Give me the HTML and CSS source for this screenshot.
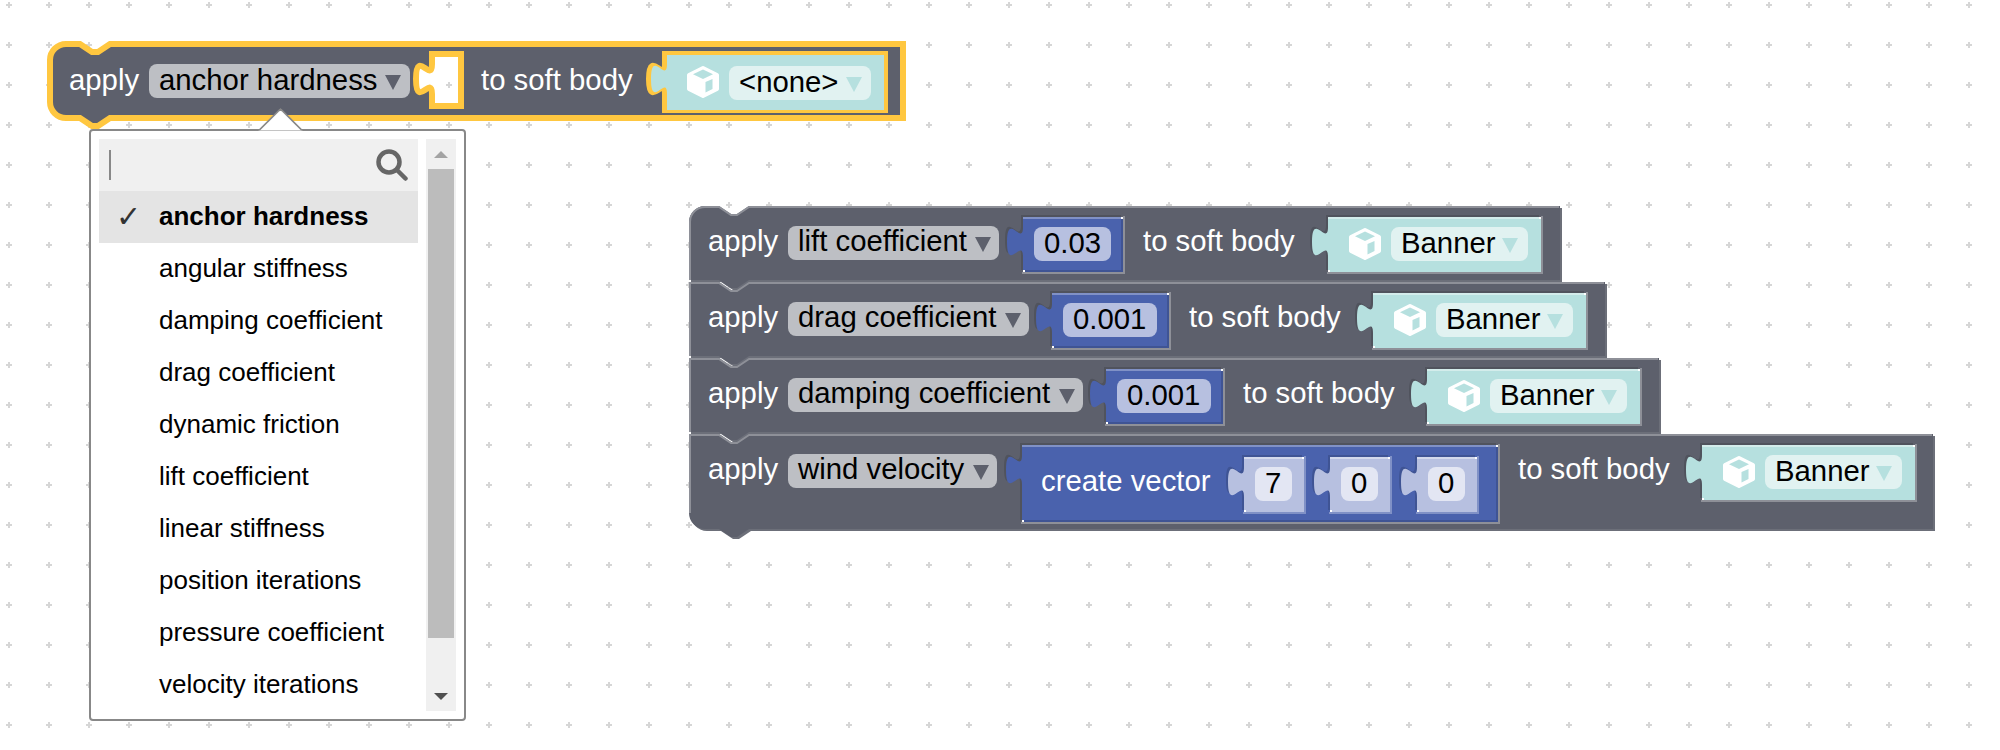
FILE: index.html
```html
<!DOCTYPE html>
<html lang="en">
<head>
<meta charset="UTF-8">
<title>Soft body blocks</title>
<link rel="stylesheet" href="styles.css">
</head>
<body>
<div class="workspace">
  <svg class="canvas" width="2000" height="750" viewBox="0 0 2000 750">
    <defs>
      <pattern id="grid" width="40" height="40" patternUnits="userSpaceOnUse">
        <path class="grid-plus" d="M6 5H12M9 2V8"/>
      </pattern>

      <!-- value blocks: hole shadow, hole highlight, body, dark edge, light edge -->
      <g id="value-213">
        <path class="hole-dark" d="M213,0 H0 v10 c0,20 -16,-16 -16,15 s16,-5 16,15 V55 H213 Z"/>
        <path class="hole-light" d="M214,-1 V56 H-1"/>
        <path class="value-body" d="M213,0 H0 v10 c0,20 -16,-16 -16,15 s16,-5 16,15 V55 H213 Z"/>
        <path class="edge-light" d="M0,1 H213"/>
        <path class="corner" d="M211,0h2v2h-2z M0,53h2v2h-2z"/>
      </g>
      <g id="value-100">
        <path class="hole-dark" d="M100,0 H0 v10 c0,20 -16,-16 -16,15 s16,-5 16,15 V55 H100 Z"/>
        <path class="hole-light" d="M101,-1 V56 H-1"/>
        <path class="value-body" d="M100,0 H0 v10 c0,20 -16,-16 -16,15 s16,-5 16,15 V55 H100 Z"/>
        <path class="edge-dark" d="M99,0 V54 H0"/>
        <path class="edge-light" d="M0,1 H100"/>
        <path class="corner" d="M98,0h2v2h-2z M0,53h2v2h-2z"/>
      </g>
      <g id="value-117">
        <path class="hole-dark" d="M117,0 H0 v10 c0,20 -16,-16 -16,15 s16,-5 16,15 V55 H117 Z"/>
        <path class="hole-light" d="M118,-1 V56 H-1"/>
        <path class="value-body" d="M117,0 H0 v10 c0,20 -16,-16 -16,15 s16,-5 16,15 V55 H117 Z"/>
        <path class="edge-dark" d="M116,0 V54 H0"/>
        <path class="edge-light" d="M0,1 H117"/>
        <path class="corner" d="M115,0h2v2h-2z M0,53h2v2h-2z"/>
      </g>
      <g id="value-vector">
        <path class="hole-dark" d="M476,0 H0 v10 c0,20 -16,-16 -16,15 s16,-5 16,15 V77 H476 Z"/>
        <path class="hole-light" d="M477,-1 V78 H-1"/>
        <path class="value-body" d="M476,0 H0 v10 c0,20 -16,-16 -16,15 s16,-5 16,15 V77 H476 Z"/>
        <path class="edge-dark" d="M475,0 V76 H0"/>
        <path class="edge-light" d="M0,1 H476"/>
        <path class="corner" d="M474,0h2v2h-2z M0,75h2v2h-2z"/>
      </g>
      <g id="value-60">
        <path class="hole-dark" d="M60,0 H0 v10 c0,20 -16,-16 -16,15 s16,-5 16,15 V55 H60 Z"/>
        <path class="hole-light" d="M61,-1 V56 H-1"/>
        <path class="value-body" d="M60,0 H0 v10 c0,20 -16,-16 -16,15 s16,-5 16,15 V55 H60 Z"/>
        <path class="edge-light" d="M0,1 H60"/>
        <path class="corner" d="M58,0h2v2h-2z M0,53h2v2h-2z"/>
      </g>

      <g id="cube">
        <path class="cube-shell" d="M16 2L30 9V23L16 30L2 23V9Z"/>
        <path class="cube-face" d="M16 3.500L26 8.300L16 13L6 8.300Z"/>
        <path class="cube-face" d="M18.500 16L25.500 13V23L18.500 26.500Z"/>
      </g>
      <path id="arrow" d="M0 0H16L8 15Z"/>
    </defs>

    <rect width="2000" height="750" fill="url(#grid)"/>

    <!-- selected block -->
    <g>
      <path class="block-selected" fill-rule="evenodd" d="M50,60 a16,16 0 0 1 16,-16 H80 l12,8 6,0 12,-8 H903 V118 H110 l-12,8 -6,0 -12,-8 H66 a16,16 0 0 1 -16,-16 Z
        M461,54 H432 v10 c0,20 -16,-16 -16,15 s16,-5 16,15 V106 H461 Z
        M885,54 H665 v10 c0,20 -16,-16 -16,15 s16,-5 16,15 V110 H885 Z"/>
      <text class="label" x="69" y="90">apply</text>
      <rect class="pill-grey" x="149" y="64" width="261" height="34" rx="8"/>
      <text class="field" x="159" y="90">anchor hardness</text>
      <use class="arrow-grey" href="#arrow" x="385" y="75"/>
      <text class="label" x="481" y="90">to soft body</text>
      <path class="teal-flat" d="M884,55 H667 v9 c0,20 -16,-16 -16,15 s16,-5 16,15 V110 H884 Z"/>
      <use class="teal-flat" href="#cube" x="687" y="66"/>
      <rect class="pill-teal" x="729" y="66" width="142" height="34" rx="8"/>
      <text class="field" x="739" y="92">&lt;none&gt;</text>
      <use class="arrow-teal" href="#arrow" x="846" y="77"/>
    </g>

    <!-- stack of blocks -->
    <g>
      <path class="block-dark" d="M689,222 a16,16 0 0 1 16,-16 H719 l12,8 6,0 12,-8 H1560 V280 H749 l-12,8 -6,0 -12,-8 H689 Z"/>
      <path class="block-body" d="M689,222 a16,16 0 0 1 16,-16 H719 l12,8 6,0 12,-8 H1560 V280 H749 l-12,8 -6,0 -12,-8 H689 Z"/>
      <path class="block-light" d="M690,280 V222 a15,15 0 0 1 15,-15 H719 l12,8 6,0 12,-8 H1559"/>
      <text class="label" x="708" y="251">apply</text>
      <rect class="pill-grey" x="788" y="226" width="211" height="34" rx="8"/>
      <text class="field" x="798" y="251">lift coefficient</text>
      <use class="arrow-grey" href="#arrow" x="975" y="237"/>
      <use class="blue" href="#value-100" x="1023" y="217"/>
      <rect class="pill-blue" x="1034" y="227" width="77" height="34" rx="8"/>
      <text class="field" x="1044" y="253">0.03</text>
      <text class="label" x="1143" y="251">to soft body</text>
      <use class="teal" href="#value-213" x="1328" y="217"/>
      <use class="teal" href="#cube" x="1349" y="228"/>
      <rect class="pill-teal" x="1391" y="227" width="137" height="34" rx="8"/>
      <text class="field" x="1401" y="253">Banner</text>
      <use class="arrow-teal" href="#arrow" x="1502" y="238"/>
    </g>
    <g>
      <path class="block-dark" d="M689,282 H719 l12,8 6,0 12,-8 H1605 V356 H749 l-12,8 -6,0 -12,-8 H689 Z"/>
      <path class="block-body" d="M689,282 H719 l12,8 6,0 12,-8 H1605 V356 H749 l-12,8 -6,0 -12,-8 H689 Z"/>
      <path class="block-light" d="M690,356 V283 H719 l12,8 6,0 12,-8 H1604"/>
      <text class="label" x="708" y="327">apply</text>
      <rect class="pill-grey" x="788" y="302" width="241" height="34" rx="8"/>
      <text class="field" x="798" y="327">drag coefficient</text>
      <use class="arrow-grey" href="#arrow" x="1005" y="313"/>
      <use class="blue" href="#value-117" x="1052" y="293"/>
      <rect class="pill-blue" x="1063" y="303" width="94" height="34" rx="8"/>
      <text class="field" x="1073" y="329">0.001</text>
      <text class="label" x="1189" y="327">to soft body</text>
      <use class="teal" href="#value-213" x="1373" y="293"/>
      <use class="teal" href="#cube" x="1394" y="304"/>
      <rect class="pill-teal" x="1436" y="303" width="137" height="34" rx="8"/>
      <text class="field" x="1446" y="329">Banner</text>
      <use class="arrow-teal" href="#arrow" x="1547" y="314"/>
    </g>
    <g>
      <path class="block-dark" d="M689,358 H719 l12,8 6,0 12,-8 H1659 V432 H749 l-12,8 -6,0 -12,-8 H689 Z"/>
      <path class="block-body" d="M689,358 H719 l12,8 6,0 12,-8 H1659 V432 H749 l-12,8 -6,0 -12,-8 H689 Z"/>
      <path class="block-light" d="M690,432 V359 H719 l12,8 6,0 12,-8 H1658"/>
      <text class="label" x="708" y="403">apply</text>
      <rect class="pill-grey" x="788" y="378" width="295" height="34" rx="8"/>
      <text class="field" x="798" y="403">damping coefficient</text>
      <use class="arrow-grey" href="#arrow" x="1059" y="389"/>
      <use class="blue" href="#value-117" x="1106" y="369"/>
      <rect class="pill-blue" x="1117" y="379" width="94" height="34" rx="8"/>
      <text class="field" x="1127" y="405">0.001</text>
      <text class="label" x="1243" y="403">to soft body</text>
      <use class="teal" href="#value-213" x="1427" y="369"/>
      <use class="teal" href="#cube" x="1448" y="380"/>
      <rect class="pill-teal" x="1490" y="379" width="137" height="34" rx="8"/>
      <text class="field" x="1500" y="405">Banner</text>
      <use class="arrow-teal" href="#arrow" x="1601" y="390"/>
    </g>
    <g>
      <path class="block-dark" d="M689,434 H719 l12,8 6,0 12,-8 H1933 V529 H749 l-12,8 -6,0 -12,-8 H705 a16,16 0 0 1 -16,-16 Z"/>
      <path class="block-body" d="M689,434 H719 l12,8 6,0 12,-8 H1933 V529 H749 l-12,8 -6,0 -12,-8 H705 a16,16 0 0 1 -16,-16 Z"/>
      <path class="block-light" d="M690,513 V435 H719 l12,8 6,0 12,-8 H1932"/>
      <text class="label" x="708" y="479">apply</text>
      <rect class="pill-grey" x="788" y="454" width="209" height="34" rx="8"/>
      <text class="field" x="798" y="479">wind velocity</text>
      <use class="arrow-grey" href="#arrow" x="973" y="465"/>
      <use class="blue" href="#value-vector" x="1022" y="445"/>
      <text class="label" x="1041" y="491">create vector</text>
      <use class="pale" href="#value-60" x="1244" y="457"/>
      <rect class="pill-pale" x="1255" y="467" width="37" height="34" rx="8"/>
      <text class="field" x="1265" y="493">7</text>
      <use class="pale" href="#value-60" x="1330" y="457"/>
      <rect class="pill-pale" x="1341" y="467" width="37" height="34" rx="8"/>
      <text class="field" x="1351" y="493">0</text>
      <use class="pale" href="#value-60" x="1417" y="457"/>
      <rect class="pill-pale" x="1428" y="467" width="37" height="34" rx="8"/>
      <text class="field" x="1438" y="493">0</text>
      <text class="label" x="1518" y="479">to soft body</text>
      <use class="teal" href="#value-213" x="1702" y="445"/>
      <use class="teal" href="#cube" x="1723" y="456"/>
      <rect class="pill-teal" x="1765" y="455" width="137" height="34" rx="8"/>
      <text class="field" x="1775" y="481">Banner</text>
      <use class="arrow-teal" href="#arrow" x="1876" y="466"/>
    </g>
  </svg>

  <!-- dropdown of the selected block -->
  <div class="menu">
    <div class="menu-arrow"></div>
    <div class="menu-list">
      <div class="search">
        <span class="search-caret"></span>
        <svg class="search-icon" width="32" height="32" viewBox="0 0 32 32">
          <circle cx="13" cy="13" r="10.500"/>
          <path d="M21 21L29.500 29.500"/>
        </svg>
      </div>
      <div class="item item-selected"><span class="tick">✓</span>anchor hardness</div>
      <div class="item"><span class="tick"></span>angular stiffness</div>
      <div class="item"><span class="tick"></span>damping coefficient</div>
      <div class="item"><span class="tick"></span>drag coefficient</div>
      <div class="item"><span class="tick"></span>dynamic friction</div>
      <div class="item"><span class="tick"></span>lift coefficient</div>
      <div class="item"><span class="tick"></span>linear stiffness</div>
      <div class="item"><span class="tick"></span>position iterations</div>
      <div class="item"><span class="tick"></span>pressure coefficient</div>
      <div class="item"><span class="tick"></span>velocity iterations</div>
    </div>
    <div class="scrollbar">
      <div class="scroll-btn"><span class="scroll-up"></span></div>
      <div class="scroll-thumb"></div>
      <div class="scroll-rest"><span class="scroll-down"></span></div>
    </div>
  </div>
</div>
</body>
</html>
```

FILE: styles.css
```css
body {
  margin: 0;
  background: #fff;
  font-family: "Liberation Sans", Arial, sans-serif;
  overflow: hidden;
}

.workspace {
  position: relative;
  width: 2000px;
  height: 750px;
}

.canvas {
  display: block;
}

.grid-plus {
  stroke: #d6d6d6;
  stroke-width: 2;
  fill: none;
}

/* blocks */
.block-body {
  fill: #5d606c;
}

.block-dark {
  fill: #6c6f79;
  transform: translate(2px, 2px);
}

.block-light {
  fill: none;
  stroke: #8e9098;
  stroke-width: 2;
}

.block-selected {
  fill: #5d606c;
  stroke: #ffc740;
  stroke-width: 6;
}

.label {
  fill: #fff;
  font-size: 29.33px;
}

.field {
  fill: #000;
  font-size: 29.33px;
}

.pill-grey {
  fill: #bdbfc4;
}

.pill-blue {
  fill: #b7c0e0;
}

.pill-teal {
  fill: #e1f2f1;
}

.pill-pale {
  fill: #e3e6f3;
}

.arrow-grey {
  fill: #5d606c;
}

.arrow-teal {
  fill: #b6e0df;
}

/* value blocks, colours come in through the class on <use> */
.teal {
  --v-fill: #b6e0df;
  --v-dark: #92b3b2;
  --v-light: #d3eceb;
  --p-dark: #50535d;
  --p-light: #8e9098;
}

.teal-flat {
  --v-fill: #b6e0df;
  fill: #b6e0df;
}

.blue {
  --v-fill: #4a62ad;
  --v-dark: #3f5494;
  --v-light: #8091c6;
  --p-dark: #50535d;
  --p-light: #8e9098;
}

.pale {
  --v-fill: #b7c0e0;
  --v-dark: #929ab3;
  --v-light: #d3d9ec;
  --p-dark: #3f5494;
  --p-light: #8091c6;
}

.hole-dark {
  fill: var(--p-dark);
  transform: translate(-2px, -2px);
}

.hole-light {
  fill: none;
  stroke: var(--p-light);
  stroke-width: 2;
}

.value-body {
  fill: var(--v-fill);
}

.edge-dark {
  fill: none;
  stroke: var(--v-dark);
  stroke-width: 2;
}

.edge-light {
  fill: none;
  stroke: var(--v-light);
  stroke-width: 2;
}

.corner {
  fill: #fff;
}

.cube-shell {
  fill: #fff;
  stroke: #fff;
  stroke-width: 4;
  stroke-linejoin: round;
}

.cube-face {
  fill: var(--v-fill);
}

/* dropdown */
.menu {
  position: absolute;
  left: 89px;
  top: 129px;
  width: 377px;
  height: 592px;
  box-sizing: border-box;
  padding: 8px;
  display: flex;
  gap: 8px;
  background: #fff;
  border: 2px solid #888;
  border-radius: 4px;
  font-size: 26px;
  color: #000;
}

.menu-arrow {
  position: absolute;
  left: 172.500px;
  top: -17px;
  width: 33px;
  height: 33px;
  box-sizing: border-box;
  background: #fff;
  border-top: 2px solid #888;
  border-left: 2px solid #888;
  border-top-left-radius: 4px;
  transform: rotate(45deg);
  clip-path: polygon(0 0, 100% 0, 0 100%);
}

.menu-list {
  width: 319px;
}

.search {
  display: flex;
  align-items: center;
  justify-content: space-between;
  height: 52px;
  padding: 0 10px;
  box-sizing: border-box;
  background: #f0f0f0;
}

.search-caret {
  width: 2px;
  height: 30px;
  background: #888;
}

.search-icon {
  fill: none;
  stroke: #666;
  stroke-width: 4.500;
  stroke-linecap: round;
}

.item {
  display: flex;
  align-items: center;
  height: 52px;
  padding-bottom: 1px;
  box-sizing: border-box;
}

.item-selected {
  background: #e4e4e4;
  font-weight: bold;
}

.tick {
  width: 60px;
  padding-left: 17px;
  box-sizing: border-box;
  font-family: "DejaVu Sans", sans-serif;
  font-size: 30px;
  font-weight: bold;
  color: #333;
}

.scrollbar {
  display: flex;
  flex-direction: column;
  align-items: center;
  width: 30px;
  background: #f0f0f0;
}

.scroll-btn {
  height: 30px;
  padding-top: 12px;
  box-sizing: border-box;
}

.scroll-up {
  display: block;
  border-left: 7.500px solid transparent;
  border-right: 7.500px solid transparent;
  border-bottom: 7px solid #a3a3a3;
}

.scroll-thumb {
  width: 26px;
  height: 469px;
  background: #bcbcbc;
}

.scroll-rest {
  flex: 1;
  display: flex;
  align-items: flex-end;
  padding-bottom: 11px;
}

.scroll-down {
  border-left: 7.500px solid transparent;
  border-right: 7.500px solid transparent;
  border-top: 7px solid #505050;
}
```
